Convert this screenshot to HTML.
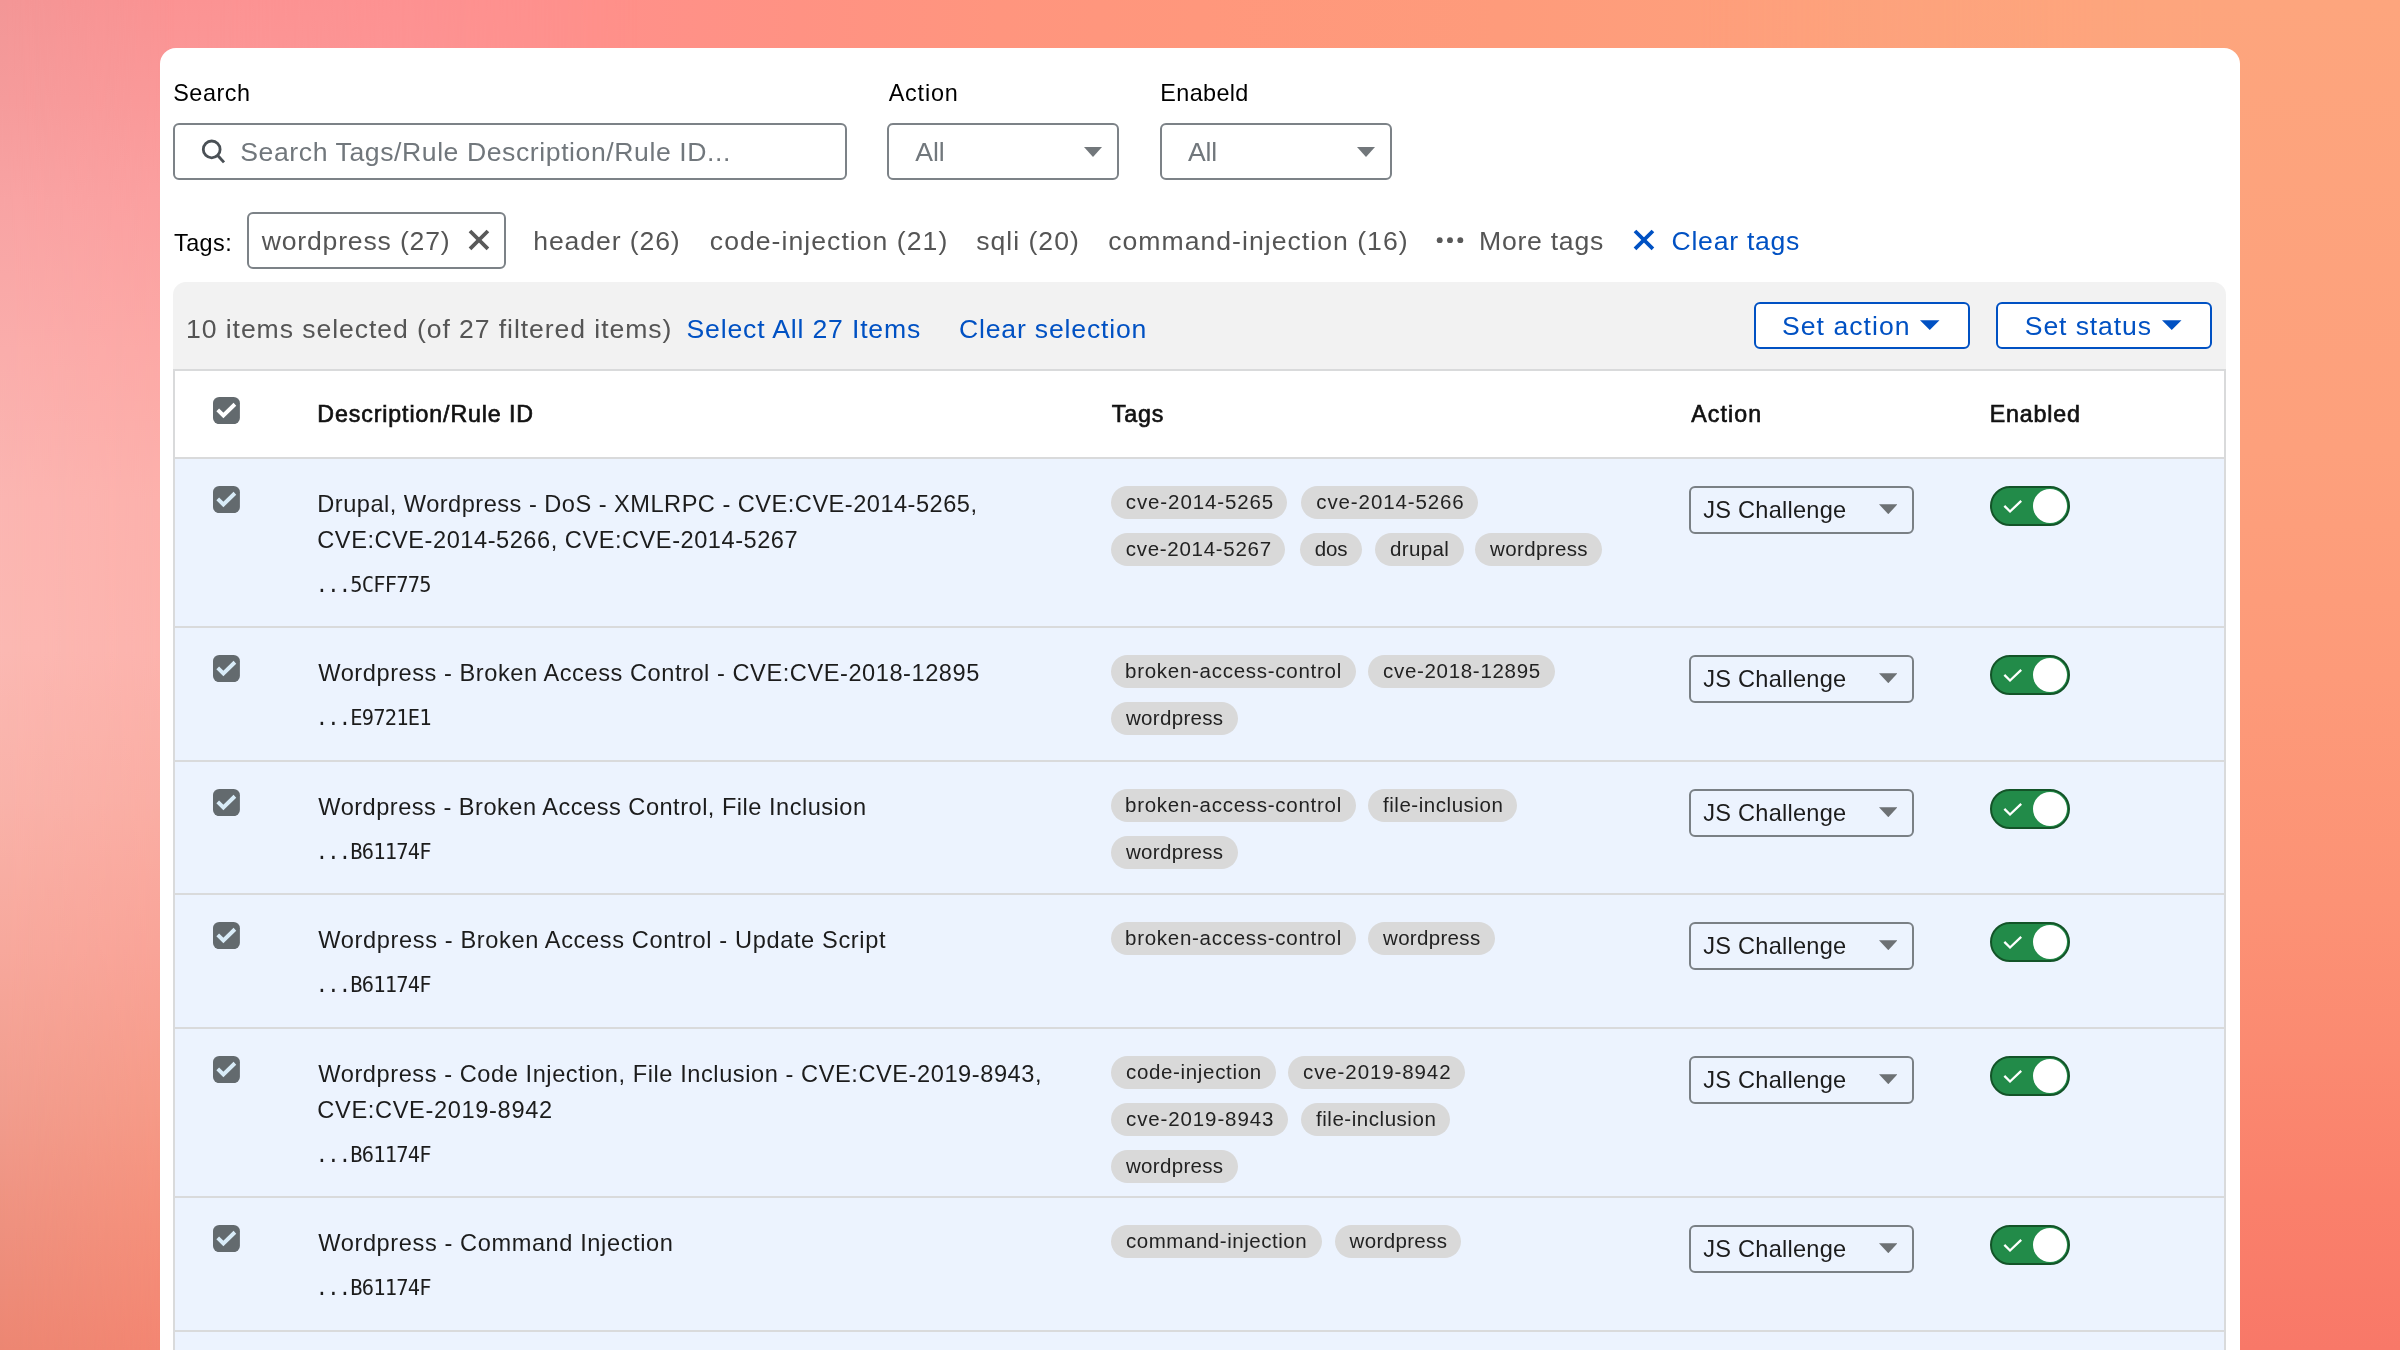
<!DOCTYPE html>
<html lang="en"><head><meta charset="utf-8"><title>Managed rules</title>
<style>
html,body{margin:0;padding:0;}
body{width:2400px;height:1350px;overflow:hidden;position:relative;background:#f99a8a;font-family:"Liberation Sans", sans-serif;}
.bg0,.bgl,.bgr,.bgd{position:absolute;top:0;height:1350px;}
.bg0{left:0;width:2400px;background:linear-gradient(to right,#fb9494 0px,#fc9393 160px,#fe9191 280px,#ff9090 400px,#ff908a 600px,#ff9283 800px,#ff957e 1000px,#ff977c 1200px,#fe9b7b 1500px,#fea07c 1800px,#fda47d 2100px,#fda67e 2400px);}
.bgl{left:0;width:700px;background:linear-gradient(to bottom,#fb9393 0px,#fb9999 100px,#fca0a0 200px,#fda9a6 350px,#fdb1ac 500px,#fdb3ad 650px,#fbaea4 800px,#faa498 950px,#f79b88 1100px,#f6907b 1225px,#f48672 1350px);-webkit-mask-image:linear-gradient(to right,#000 0px,#000 175px,transparent 640px);mask-image:linear-gradient(to right,#000 0px,#000 175px,transparent 640px);}
.bgr{left:1700px;width:700px;background:linear-gradient(to bottom,#fda57d 0px,#fda07c 450px,#fd9a79 675px,#fc9275 900px,#fb8a71 1050px,#fa806b 1200px,#f87868 1350px);-webkit-mask-image:linear-gradient(to right,transparent 0px,#000 520px,#000 700px);mask-image:linear-gradient(to right,transparent 0px,#000 520px,#000 700px);}
.bgd{left:0;width:200px;background:linear-gradient(to bottom,#f39696 0px,#f59b9b 100px,#f8a3a3 200px,#faadab 350px,#fbb5b1 500px,#fbb8b2 650px,#f9b2a9 800px,#f7a89c 950px,#f19d8e 1100px,#ee917f 1225px,#ec8672 1350px);-webkit-mask-image:linear-gradient(to right,#000 0px,transparent 175px);mask-image:linear-gradient(to right,#000 0px,transparent 175px);}
.card{position:absolute;left:160px;top:48px;width:2080px;height:1400px;background:#fff;border-radius:16px 16px 0 0;}
.layer{position:absolute;left:0;top:0;width:2400px;height:1350px;will-change:transform;}
.g{display:contents;}
.b{position:absolute;box-sizing:border-box;display:block;}
.t,.m{position:absolute;white-space:nowrap;line-height:40px;}
.m{font-family:"DejaVu Sans Mono", "Liberation Mono", monospace;}
.pill{height:33px;border-radius:17px;background:#d9d9d9;text-align:center;overflow:visible;white-space:nowrap;}
.tog{width:80px;height:40px;border-radius:20px;background:#228b49;border:2px solid #135428;}
.knob{width:34px;height:34px;border-radius:17px;background:#fff;}
</style></head><body>
<div class="bg0"></div><div class="bgl"></div><div class="bgr"></div><div class="bgd"></div>
<div class="card"></div>
<div class="layer">
<section class="g" aria-label="Filters">
<span class="t" style="left:173.20px;top:72.69px;font-size:23.4px;color:#000;letter-spacing:0.56px;">Search</span>
<span class="t" style="left:888.70px;top:72.69px;font-size:23.4px;color:#000;letter-spacing:0.8px;">Action</span>
<span class="t" style="left:1160.30px;top:72.69px;font-size:23.4px;color:#000;letter-spacing:0.367px;">Enabeld</span>
<div class="b " style="left:173px;top:123px;width:674px;height:57px;border:2px solid #7c8287;border-radius:6px;background:#fff;"></div>
<svg class="b" style="left:198px;top:138px" width="30" height="30" viewBox="0 0 30 30"><circle cx="13.7" cy="11.4" r="8.4" fill="none" stroke="#4a5055" stroke-width="2.8"/><path d="M19.3 17 L26.0 24.4" stroke="#4a5055" stroke-width="2.9" stroke-linecap="butt"/></svg>
<span class="t ph" style="left:240.30px;top:131.98px;font-size:26.6px;color:#71777c;letter-spacing:0.579px;">Search Tags/Rule Description/Rule ID...</span>
<div class="b " style="left:887px;top:123px;width:232px;height:57px;border:2px solid #7c8287;border-radius:6px;background:#fff;"></div>
<span class="t" style="left:915.30px;top:131.98px;font-size:26.6px;color:#71777c;letter-spacing:-0.15px;">All</span>
<svg class="b" style="left:1083.5px;top:146.7px" width="18" height="10" viewBox="0 0 18 10"><path d="M0 0 H18 L9 9.9 Z" fill="#72777b"/></svg>
<div class="b " style="left:1160px;top:123px;width:232px;height:57px;border:2px solid #7c8287;border-radius:6px;background:#fff;"></div>
<span class="t" style="left:1188.00px;top:131.98px;font-size:26.6px;color:#71777c;letter-spacing:-0.15px;">All</span>
<svg class="b" style="left:1356.5px;top:146.7px" width="18" height="10" viewBox="0 0 18 10"><path d="M0 0 H18 L9 9.9 Z" fill="#72777b"/></svg>
</section>
<nav class="g" aria-label="Tags">
<span class="t" style="left:174.00px;top:222.69px;font-size:23.4px;color:#000;letter-spacing:0.45px;">Tags:</span>
<div class="b " style="left:247px;top:212px;width:259px;height:57px;border:2px solid #7c8287;border-radius:6px;background:#fff;"></div>
<span class="t" style="left:261.70px;top:220.78px;font-size:26.6px;color:#555;letter-spacing:0.815px;">wordpress (27)</span>
<svg class="b" style="left:467.14px;top:228.24px" width="23.92" height="23.92" viewBox="0 0 23.92 23.92"><path d="M3 3 L20.92 20.92 M20.92 3 L3 20.92" stroke="#595959" stroke-width="3.78"/></svg>
<span class="t" style="left:533.20px;top:220.78px;font-size:26.6px;color:#555;letter-spacing:0.9px;">header (26)</span>
<span class="t" style="left:709.80px;top:220.78px;font-size:26.6px;color:#555;letter-spacing:1.039px;">code-injection (21)</span>
<span class="t" style="left:976.20px;top:220.78px;font-size:26.6px;color:#555;letter-spacing:1.0px;">sqli (20)</span>
<span class="t" style="left:1108.20px;top:220.78px;font-size:26.6px;color:#555;letter-spacing:1.024px;">command-injection (16)</span>
<svg class="b" style="left:1436px;top:236px" width="30" height="9" viewBox="0 0 30 9"><circle cx="3.7" cy="4.15" r="2.95" fill="#595959"/><circle cx="14.0" cy="4.15" r="2.95" fill="#595959"/><circle cx="24.3" cy="4.15" r="2.95" fill="#595959"/></svg>
<span class="t" style="left:1479.00px;top:220.78px;font-size:26.6px;color:#555;letter-spacing:0.75px;">More tags</span>
<svg class="b" style="left:1632.04px;top:228.34px" width="23.92" height="23.92" viewBox="0 0 23.92 23.92"><path d="M3 3 L20.92 20.92 M20.92 3 L3 20.92" stroke="#0051c3" stroke-width="3.78"/></svg>
<span class="t" style="left:1671.50px;top:220.78px;font-size:26.6px;color:#0051c3;letter-spacing:0.744px;">Clear tags</span>
</nav>
<div class="g" role="toolbar" aria-label="Bulk actions">
<div class="b " style="left:173px;top:282px;width:2053px;height:90px;background:#f2f2f2;border-radius:13px 13px 0 0;"></div>
<span class="t" style="left:186.00px;top:309.48px;font-size:26.6px;color:#555;letter-spacing:0.923px;">10 items selected (of 27 filtered items)</span>
<span class="t" style="left:686.50px;top:309.48px;font-size:26.6px;color:#0051c3;letter-spacing:0.833px;">Select All 27 Items</span>
<span class="t" style="left:959.00px;top:309.48px;font-size:26.6px;color:#0051c3;letter-spacing:0.821px;">Clear selection</span>
<div class="b " style="left:1754px;top:302px;width:216px;height:47px;border:2px solid #0051c3;border-radius:6px;background:#fff;"></div>
<span class="t" style="left:1782.00px;top:305.78px;font-size:26.6px;color:#0051c3;letter-spacing:1.033px;">Set action</span>
<svg class="b" style="left:1920px;top:320.4px" width="19.5" height="10" viewBox="0 0 19.5 10"><path d="M0 0.2 H19.5 L9.75 10 Z" fill="#0051c3"/></svg>
<div class="b " style="left:1996px;top:302px;width:216px;height:47px;border:2px solid #0051c3;border-radius:6px;background:#fff;"></div>
<span class="t" style="left:2024.80px;top:305.78px;font-size:26.6px;color:#0051c3;letter-spacing:0.889px;">Set status</span>
<svg class="b" style="left:2162.3px;top:320.4px" width="19.5" height="10" viewBox="0 0 19.5 10"><path d="M0 0.2 H19.5 L9.75 10 Z" fill="#0051c3"/></svg>
</div>
<div class="g" role="table" aria-label="Managed rules">
<div class="b " style="left:173px;top:369px;width:2053px;height:1000px;border:2px solid #d9dadb;background:#fff;"></div>
<div class="b " style="left:175px;top:457px;width:2049px;height:2px;background:#d9dadb;"></div>
<div class="g" role="row">
<svg class="b" style="left:213.4px;top:396.9px" width="26.9" height="27.2" viewBox="0 0 26.9 27.2"><rect width="26.9" height="27.2" rx="6.2" fill="#636a6e"/><path d="M4.72 12.8 L10.4 18.45 L21.9 7.25" fill="none" stroke="#fff" stroke-width="3.88"/></svg>
<span class="t th" style="left:317.30px;top:393.66px;font-size:23.2px;color:#111;letter-spacing:0.889px;-webkit-text-stroke:0.65px #111;">Description/Rule ID</span>
<span class="t th" style="left:1111.70px;top:393.66px;font-size:23.2px;color:#111;letter-spacing:0.867px;-webkit-text-stroke:0.65px #111;">Tags</span>
<span class="t th" style="left:1691.30px;top:393.66px;font-size:23.2px;color:#111;letter-spacing:1.08px;-webkit-text-stroke:0.65px #111;">Action</span>
<span class="t th" style="left:1989.80px;top:393.66px;font-size:23.2px;color:#111;letter-spacing:0.817px;-webkit-text-stroke:0.65px #111;">Enabled</span>
</div>
<div class="g" role="row">
<div class="b " style="left:175px;top:459px;width:2049px;height:167px;background:#ecf3fe;"></div>
<div class="b " style="left:175px;top:626px;width:2049px;height:2px;background:#d9dadb;"></div>
<svg class="b" style="left:213.4px;top:485.6px" width="26.9" height="27.2" viewBox="0 0 26.9 27.2"><rect width="26.9" height="27.2" rx="6.2" fill="#636a6e"/><path d="M4.72 12.8 L10.4 18.45 L21.9 7.25" fill="none" stroke="#d9ecf8" stroke-width="3.88"/></svg>
<span class="t ti" style="left:317.30px;top:483.62px;font-size:23.6px;color:#1c1c1c;letter-spacing:0.49px;">Drupal, Wordpress - DoS - XMLRPC - CVE:CVE-2014-5265,</span>
<span class="t ti" style="left:317.30px;top:519.82px;font-size:23.6px;color:#1c1c1c;letter-spacing:0.534px;">CVE:CVE-2014-5266, CVE:CVE-2014-5267</span>
<span class="m id" style="left:315.70px;top:564.54px;font-size:20.4px;color:#1c1c1c;letter-spacing:-0.767px;">...5CFF775</span>
<div class="b pill" style="left:1110.8px;top:485.8px;width:176.7px;"></div>
<span class="t pt" style="left:1125.80px;top:482.20px;font-size:20.5px;color:#222;letter-spacing:0.892px;">cve-2014-5265</span>
<div class="b pill" style="left:1301.3px;top:485.8px;width:176.7px;"></div>
<span class="t pt" style="left:1316.30px;top:482.20px;font-size:20.5px;color:#222;letter-spacing:0.892px;">cve-2014-5266</span>
<div class="b pill" style="left:1110.8px;top:532.7px;width:174.5px;"></div>
<span class="t pt" style="left:1125.80px;top:529.10px;font-size:20.5px;color:#222;letter-spacing:0.708px;">cve-2014-5267</span>
<div class="b pill" style="left:1299.7px;top:532.7px;width:62.8px;"></div>
<span class="t pt" style="left:1314.70px;top:529.10px;font-size:20.5px;color:#222;letter-spacing:-0.1px;">dos</span>
<div class="b pill" style="left:1375.0px;top:532.7px;width:88.7px;"></div>
<span class="t pt" style="left:1390.00px;top:529.10px;font-size:20.5px;color:#222;letter-spacing:0.34px;">drupal</span>
<div class="b pill" style="left:1475.0px;top:532.7px;width:127.0px;"></div>
<span class="t pt" style="left:1490.00px;top:529.10px;font-size:20.5px;color:#222;letter-spacing:0.375px;">wordpress</span>
<div class="b " style="left:1689px;top:486px;width:225px;height:48px;border:2px solid #7a8085;border-radius:6px;"></div>
<span class="t js" style="left:1703.30px;top:490.12px;font-size:23.6px;color:#1c1c1c;letter-spacing:0.227px;">JS Challenge</span>
<svg class="b" style="left:1878.5px;top:504.2px" width="18.6" height="10.2" viewBox="0 0 18.6 10.2"><path d="M0 0.2 H18.6 L9.3 10.2 Z" fill="#6d7174"/></svg>
<div class="b tog" style="left:1990px;top:485.8px"></div>
<div class="b knob" style="left:2033.2px;top:489.0px"></div>
<svg class="b" style="left:2000px;top:495.8px" width="26" height="20" viewBox="0 0 26 20"><path d="M4.34 9.84 L10.03 15.5 L21.2 4.93" fill="none" stroke="#fff" stroke-width="2.3"/></svg>
</div>
<div class="g" role="row">
<div class="b " style="left:175px;top:628px;width:2049px;height:132px;background:#ecf3fe;"></div>
<div class="b " style="left:175px;top:760px;width:2049px;height:2px;background:#d9dadb;"></div>
<svg class="b" style="left:213.4px;top:654.6px" width="26.9" height="27.2" viewBox="0 0 26.9 27.2"><rect width="26.9" height="27.2" rx="6.2" fill="#636a6e"/><path d="M4.72 12.8 L10.4 18.45 L21.9 7.25" fill="none" stroke="#d9ecf8" stroke-width="3.88"/></svg>
<span class="t ti" style="left:318.30px;top:652.62px;font-size:23.6px;color:#1c1c1c;letter-spacing:0.555px;">Wordpress - Broken Access Control - CVE:CVE-2018-12895</span>
<span class="m id" style="left:315.70px;top:697.94px;font-size:20.4px;color:#1c1c1c;letter-spacing:-0.767px;">...E9721E1</span>
<div class="b pill" style="left:1111.0px;top:654.8px;width:244.6px;"></div>
<span class="t pt" style="left:1125.00px;top:651.20px;font-size:20.5px;color:#222;letter-spacing:0.73px;">broken-access-control</span>
<div class="b pill" style="left:1368.0px;top:654.8px;width:187.0px;"></div>
<span class="t pt" style="left:1383.00px;top:651.20px;font-size:20.5px;color:#222;letter-spacing:0.692px;">cve-2018-12895</span>
<div class="b pill" style="left:1111.0px;top:701.7px;width:126.5px;"></div>
<span class="t pt" style="left:1126.00px;top:698.10px;font-size:20.5px;color:#222;letter-spacing:0.312px;">wordpress</span>
<div class="b " style="left:1689px;top:655px;width:225px;height:48px;border:2px solid #7a8085;border-radius:6px;"></div>
<span class="t js" style="left:1703.30px;top:659.12px;font-size:23.6px;color:#1c1c1c;letter-spacing:0.227px;">JS Challenge</span>
<svg class="b" style="left:1878.5px;top:673.2px" width="18.6" height="10.2" viewBox="0 0 18.6 10.2"><path d="M0 0.2 H18.6 L9.3 10.2 Z" fill="#6d7174"/></svg>
<div class="b tog" style="left:1990px;top:654.8px"></div>
<div class="b knob" style="left:2033.2px;top:658.0px"></div>
<svg class="b" style="left:2000px;top:664.8px" width="26" height="20" viewBox="0 0 26 20"><path d="M4.34 9.84 L10.03 15.5 L21.2 4.93" fill="none" stroke="#fff" stroke-width="2.3"/></svg>
</div>
<div class="g" role="row">
<div class="b " style="left:175px;top:762px;width:2049px;height:131px;background:#ecf3fe;"></div>
<div class="b " style="left:175px;top:893px;width:2049px;height:2px;background:#d9dadb;"></div>
<svg class="b" style="left:213.4px;top:788.6px" width="26.9" height="27.2" viewBox="0 0 26.9 27.2"><rect width="26.9" height="27.2" rx="6.2" fill="#636a6e"/><path d="M4.72 12.8 L10.4 18.45 L21.9 7.25" fill="none" stroke="#d9ecf8" stroke-width="3.88"/></svg>
<span class="t ti" style="left:318.30px;top:786.62px;font-size:23.6px;color:#1c1c1c;letter-spacing:0.494px;">Wordpress - Broken Access Control, File Inclusion</span>
<span class="m id" style="left:315.70px;top:831.94px;font-size:20.4px;color:#1c1c1c;letter-spacing:-0.767px;">...B61174F</span>
<div class="b pill" style="left:1111.0px;top:788.8px;width:244.6px;"></div>
<span class="t pt" style="left:1125.00px;top:785.20px;font-size:20.5px;color:#222;letter-spacing:0.73px;">broken-access-control</span>
<div class="b pill" style="left:1368.0px;top:788.8px;width:149.0px;"></div>
<span class="t pt" style="left:1383.00px;top:785.20px;font-size:20.5px;color:#222;letter-spacing:0.538px;">file-inclusion</span>
<div class="b pill" style="left:1111.0px;top:835.7px;width:126.5px;"></div>
<span class="t pt" style="left:1126.00px;top:832.10px;font-size:20.5px;color:#222;letter-spacing:0.312px;">wordpress</span>
<div class="b " style="left:1689px;top:789px;width:225px;height:48px;border:2px solid #7a8085;border-radius:6px;"></div>
<span class="t js" style="left:1703.30px;top:793.12px;font-size:23.6px;color:#1c1c1c;letter-spacing:0.227px;">JS Challenge</span>
<svg class="b" style="left:1878.5px;top:807.2px" width="18.6" height="10.2" viewBox="0 0 18.6 10.2"><path d="M0 0.2 H18.6 L9.3 10.2 Z" fill="#6d7174"/></svg>
<div class="b tog" style="left:1990px;top:788.8px"></div>
<div class="b knob" style="left:2033.2px;top:792.0px"></div>
<svg class="b" style="left:2000px;top:798.8px" width="26" height="20" viewBox="0 0 26 20"><path d="M4.34 9.84 L10.03 15.5 L21.2 4.93" fill="none" stroke="#fff" stroke-width="2.3"/></svg>
</div>
<div class="g" role="row">
<div class="b " style="left:175px;top:895px;width:2049px;height:132px;background:#ecf3fe;"></div>
<div class="b " style="left:175px;top:1027px;width:2049px;height:2px;background:#d9dadb;"></div>
<svg class="b" style="left:213.4px;top:921.6px" width="26.9" height="27.2" viewBox="0 0 26.9 27.2"><rect width="26.9" height="27.2" rx="6.2" fill="#636a6e"/><path d="M4.72 12.8 L10.4 18.45 L21.9 7.25" fill="none" stroke="#d9ecf8" stroke-width="3.88"/></svg>
<span class="t ti" style="left:318.30px;top:919.62px;font-size:23.6px;color:#1c1c1c;letter-spacing:0.625px;">Wordpress - Broken Access Control - Update Script</span>
<span class="m id" style="left:315.70px;top:964.94px;font-size:20.4px;color:#1c1c1c;letter-spacing:-0.767px;">...B61174F</span>
<div class="b pill" style="left:1111.0px;top:921.8px;width:244.6px;"></div>
<span class="t pt" style="left:1125.00px;top:918.20px;font-size:20.5px;color:#222;letter-spacing:0.73px;">broken-access-control</span>
<div class="b pill" style="left:1368.0px;top:921.8px;width:126.6px;"></div>
<span class="t pt" style="left:1383.00px;top:918.20px;font-size:20.5px;color:#222;letter-spacing:0.325px;">wordpress</span>
<div class="b " style="left:1689px;top:922px;width:225px;height:48px;border:2px solid #7a8085;border-radius:6px;"></div>
<span class="t js" style="left:1703.30px;top:926.12px;font-size:23.6px;color:#1c1c1c;letter-spacing:0.227px;">JS Challenge</span>
<svg class="b" style="left:1878.5px;top:940.2px" width="18.6" height="10.2" viewBox="0 0 18.6 10.2"><path d="M0 0.2 H18.6 L9.3 10.2 Z" fill="#6d7174"/></svg>
<div class="b tog" style="left:1990px;top:921.8px"></div>
<div class="b knob" style="left:2033.2px;top:925.0px"></div>
<svg class="b" style="left:2000px;top:931.8px" width="26" height="20" viewBox="0 0 26 20"><path d="M4.34 9.84 L10.03 15.5 L21.2 4.93" fill="none" stroke="#fff" stroke-width="2.3"/></svg>
</div>
<div class="g" role="row">
<div class="b " style="left:175px;top:1029px;width:2049px;height:167px;background:#ecf3fe;"></div>
<div class="b " style="left:175px;top:1196px;width:2049px;height:2px;background:#d9dadb;"></div>
<svg class="b" style="left:213.4px;top:1055.6px" width="26.9" height="27.2" viewBox="0 0 26.9 27.2"><rect width="26.9" height="27.2" rx="6.2" fill="#636a6e"/><path d="M4.72 12.8 L10.4 18.45 L21.9 7.25" fill="none" stroke="#d9ecf8" stroke-width="3.88"/></svg>
<span class="t ti" style="left:318.30px;top:1053.62px;font-size:23.6px;color:#1c1c1c;letter-spacing:0.568px;">Wordpress - Code Injection, File Inclusion - CVE:CVE-2019-8943,</span>
<span class="t ti" style="left:317.30px;top:1089.82px;font-size:23.6px;color:#1c1c1c;letter-spacing:0.656px;">CVE:CVE-2019-8942</span>
<span class="m id" style="left:315.70px;top:1134.54px;font-size:20.4px;color:#1c1c1c;letter-spacing:-0.767px;">...B61174F</span>
<div class="b pill" style="left:1111.0px;top:1055.8px;width:164.6px;"></div>
<span class="t pt" style="left:1126.00px;top:1052.20px;font-size:20.5px;color:#222;letter-spacing:0.662px;">code-injection</span>
<div class="b pill" style="left:1288.0px;top:1055.8px;width:176.8px;"></div>
<span class="t pt" style="left:1303.00px;top:1052.20px;font-size:20.5px;color:#222;letter-spacing:0.9px;">cve-2019-8942</span>
<div class="b pill" style="left:1111.0px;top:1102.7px;width:176.6px;"></div>
<span class="t pt" style="left:1126.00px;top:1099.10px;font-size:20.5px;color:#222;letter-spacing:0.883px;">cve-2019-8943</span>
<div class="b pill" style="left:1301.0px;top:1102.7px;width:149.0px;"></div>
<span class="t pt" style="left:1316.00px;top:1099.10px;font-size:20.5px;color:#222;letter-spacing:0.538px;">file-inclusion</span>
<div class="b pill" style="left:1111.0px;top:1149.6px;width:126.5px;"></div>
<span class="t pt" style="left:1126.00px;top:1146.00px;font-size:20.5px;color:#222;letter-spacing:0.312px;">wordpress</span>
<div class="b " style="left:1689px;top:1056px;width:225px;height:48px;border:2px solid #7a8085;border-radius:6px;"></div>
<span class="t js" style="left:1703.30px;top:1060.12px;font-size:23.6px;color:#1c1c1c;letter-spacing:0.227px;">JS Challenge</span>
<svg class="b" style="left:1878.5px;top:1074.2px" width="18.6" height="10.2" viewBox="0 0 18.6 10.2"><path d="M0 0.2 H18.6 L9.3 10.2 Z" fill="#6d7174"/></svg>
<div class="b tog" style="left:1990px;top:1055.8px"></div>
<div class="b knob" style="left:2033.2px;top:1059.0px"></div>
<svg class="b" style="left:2000px;top:1065.8px" width="26" height="20" viewBox="0 0 26 20"><path d="M4.34 9.84 L10.03 15.5 L21.2 4.93" fill="none" stroke="#fff" stroke-width="2.3"/></svg>
</div>
<div class="g" role="row">
<div class="b " style="left:175px;top:1198px;width:2049px;height:132px;background:#ecf3fe;"></div>
<div class="b " style="left:175px;top:1330px;width:2049px;height:2px;background:#d9dadb;"></div>
<svg class="b" style="left:213.4px;top:1224.6px" width="26.9" height="27.2" viewBox="0 0 26.9 27.2"><rect width="26.9" height="27.2" rx="6.2" fill="#636a6e"/><path d="M4.72 12.8 L10.4 18.45 L21.9 7.25" fill="none" stroke="#d9ecf8" stroke-width="3.88"/></svg>
<span class="t ti" style="left:318.30px;top:1222.62px;font-size:23.6px;color:#1c1c1c;letter-spacing:0.596px;">Wordpress - Command Injection</span>
<span class="m id" style="left:315.70px;top:1267.94px;font-size:20.4px;color:#1c1c1c;letter-spacing:-0.767px;">...B61174F</span>
<div class="b pill" style="left:1111.0px;top:1224.8px;width:210.6px;"></div>
<span class="t pt" style="left:1126.00px;top:1221.20px;font-size:20.5px;color:#222;letter-spacing:0.537px;">command-injection</span>
<div class="b pill" style="left:1334.6px;top:1224.8px;width:126.8px;"></div>
<span class="t pt" style="left:1349.60px;top:1221.20px;font-size:20.5px;color:#222;letter-spacing:0.35px;">wordpress</span>
<div class="b " style="left:1689px;top:1225px;width:225px;height:48px;border:2px solid #7a8085;border-radius:6px;"></div>
<span class="t js" style="left:1703.30px;top:1229.12px;font-size:23.6px;color:#1c1c1c;letter-spacing:0.227px;">JS Challenge</span>
<svg class="b" style="left:1878.5px;top:1243.2px" width="18.6" height="10.2" viewBox="0 0 18.6 10.2"><path d="M0 0.2 H18.6 L9.3 10.2 Z" fill="#6d7174"/></svg>
<div class="b tog" style="left:1990px;top:1224.8px"></div>
<div class="b knob" style="left:2033.2px;top:1228.0px"></div>
<svg class="b" style="left:2000px;top:1234.8px" width="26" height="20" viewBox="0 0 26 20"><path d="M4.34 9.84 L10.03 15.5 L21.2 4.93" fill="none" stroke="#fff" stroke-width="2.3"/></svg>
</div>
<div class="g" role="row">
<div class="b " style="left:175px;top:1332px;width:2049px;height:132px;background:#ecf3fe;"></div>
<div class="b " style="left:175px;top:1464px;width:2049px;height:2px;background:#d9dadb;"></div>
</div>
</div>
</div>
</body></html>
